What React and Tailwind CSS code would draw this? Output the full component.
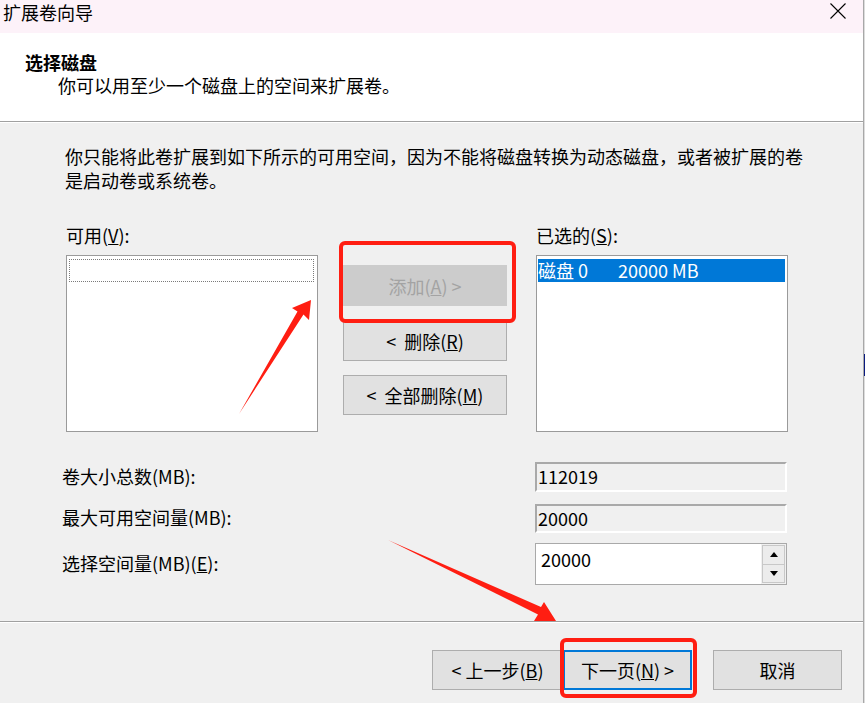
import React from 'react';

const font = "font-['Microsoft_YaHei','Noto_Sans_CJK_SC',sans-serif]";

function Btn({ children, className = '', muted = false }) {
  return (
    <div
      className={`flex items-center justify-center text-[18px] leading-[24px] ${
        muted ? 'text-[#a3a3a3]' : 'text-black'
      } ${className}`}
    >
      {children}
    </div>
  );
}

function ReadOnlyBox({ value, className = '' }) {
  return (
    <div
      className={`w-[252px] border-2 border-t-[#a9a9a9] border-l-[#a9a9a9] border-b-white border-r-white bg-[#f0f0f0] pl-px text-[18px] leading-[24px] ${className}`}
    >
      {value}
    </div>
  );
}

function Arrows() {
  return (
    <svg className="pointer-events-none absolute left-0 top-0" width="865" height="703" viewBox="0 0 865 703">
      <polygon
        fill="#ff1e12"
        points="311,300 309,320 303.5,314.5 239,414 297.5,311.5 292,308"
      />
      <polygon
        fill="#ff1e12"
        points="556,621 534,621 538,614.5 388,540 541,607 544,602"
      />
    </svg>
  );
}

export default function App() {
  return (
    <div className={`relative flex h-[703px] w-[865px] overflow-hidden bg-[#f0f0f0] text-black ${font}`}>
      <div className="flex w-[863px] flex-col">
        {/* title bar */}
        <div className="flex h-[33px] items-start justify-between bg-[#fdf2f9]">
          <div className="pl-[3px] text-[18px] leading-[24px]">扩展卷向导</div>
          <svg className="mr-[17px] mt-[3px]" width="16" height="16" viewBox="0 0 16 16">
            <path d="M0.5 0.5 L15.5 15.5 M15.5 0.5 L0.5 15.5" stroke="#000" strokeWidth="1.1" />
          </svg>
        </div>

        {/* header */}
        <div className="h-[88px] bg-white pl-[25px] pt-[18px]">
          <div className="text-[18px] font-bold leading-[22px]">选择磁盘</div>
          <div className="pl-[33px] text-[18px] leading-[24px]">你可以用至少一个磁盘上的空间来扩展卷。</div>
        </div>
        <div className="h-px bg-[#a0a0a0]" />
        <div className="h-px bg-white" />

        {/* body */}
        <div className="flex h-[498px] flex-col pl-[62px] pt-[21px]">
          <div className="pl-[3px] text-[18px] leading-[24px]">
            你只能将此卷扩展到如下所示的可用空间，因为不能将磁盘转换为动态磁盘，或者被扩展的卷
            <br />
            是启动卷或系统卷。
          </div>

          <div className="mt-[32px] flex items-start pl-[4px]">
            <div className="flex flex-col">
              <div className="-mt-px mb-px text-[18px] leading-[24px]">
                可用(<u>V</u>):
              </div>
              <div className="mt-[7px] h-[177px] w-[252px] border border-[#9a9a9a] bg-white">
                <div className="ml-[2px] mt-[3px] h-[23px] w-[245px] border border-dotted border-[#7a7a7a]" />
              </div>
            </div>

            <div className="ml-[25px] flex w-[164px] flex-col pt-[41px]">
              <Btn muted className="h-[41px] bg-[#cccccc]">
                添加(<u>A</u>)&nbsp;&gt;
              </Btn>
              <Btn className="mt-[15px] h-[40px] border border-[#adadad] bg-[#e1e1e1]">
                &lt;&nbsp;&nbsp;删除(<u>R</u>)
              </Btn>
              <Btn className="mt-[14px] h-[40px] border border-[#adadad] bg-[#e1e1e1]">
                &lt;&nbsp;&nbsp;全部删除(<u>M</u>)
              </Btn>
            </div>

            <div className="ml-[29px] flex flex-col">
              <div className="-mt-px mb-px text-[18px] leading-[24px]">
                已选的(<u>S</u>):
              </div>
              <div className="mt-[7px] h-[177px] w-[252px] border border-[#9a9a9a] bg-white p-px">
                <div className="mt-[2px] flex h-[23px] w-[247px] items-center bg-[#0078d7] text-[18px] leading-[23px] text-white">
                  <span>磁盘 0</span>
                  <span className="ml-[30px]">20000 MB</span>
                </div>
              </div>
            </div>
          </div>

          <div className="mt-[30px] flex flex-col">
            <div className="flex items-center">
              <div className="-mt-[3px] w-[473px] text-[18px] leading-[24px]">卷大小总数(MB):</div>
              <ReadOnlyBox value="112019" className="h-[30px]" />
            </div>
            <div className="mt-[12px] flex items-center">
              <div className="-mt-[3px] w-[473px] text-[18px] leading-[24px]">最大可用空间量(MB):</div>
              <ReadOnlyBox value="20000" className="h-[29px]" />
            </div>
            <div className="mt-[10px] flex items-center">
              <div className="-mt-[3px] w-[473px] text-[18px] leading-[24px]">
                选择空间量(MB)(<u>E</u>):
              </div>
              <div className="flex h-[42px] w-[252px] border border-[#a9a9a9] bg-white">
                <div className="flex-1 pl-[5px] pt-[3px] text-[18px] leading-[24px]">20000</div>
                <div className="flex w-[25px] flex-col bg-[#f0f0f0] p-px">
                  <div className="flex flex-1 items-center justify-center border border-[#c8c8c8] bg-[#ececec]">
                    <svg width="8" height="5" viewBox="0 0 8 5">
                      <polygon points="4,0 8,5 0,5" fill="#000" />
                    </svg>
                  </div>
                  <div className="flex flex-1 items-center justify-center border border-t-0 border-[#c8c8c8] bg-[#ececec]">
                    <svg width="8" height="5" viewBox="0 0 8 5">
                      <polygon points="0,0 8,0 4,5" fill="#000" />
                    </svg>
                  </div>
                </div>
              </div>
            </div>
          </div>
        </div>

        <div className="h-px bg-[#a0a0a0]" />
        <div className="h-px bg-white" />

        {/* footer */}
        <div className="flex flex-1 items-start justify-end pr-[21px] pt-[27px]">
          <Btn className="h-[40px] w-[131px] border border-[#adadad] bg-[#e1e1e1]">
            &lt;&nbsp;上一步(<u>B</u>)
          </Btn>
          <Btn className="h-[40px] w-[129px] border-2 border-[#0078d7] bg-[#e1e1e1]">
            下一页(<u>N</u>)&nbsp;&gt;
          </Btn>
          <Btn className="ml-[21px] h-[40px] w-[129px] border border-[#adadad] bg-[#e1e1e1]">
            取消
          </Btn>
        </div>
      </div>

      {/* window behind the dialog */}
      <div className="flex w-[2px] flex-col border-l border-[#a8a8a8] bg-[#dcdcdc]">
        <div className="h-[354px]" />
        <div className="h-[22px] bg-[#0a1a80]" />
      </div>

      {/* annotation marks */}
      <div className="pointer-events-none absolute left-[339px] top-[241px] h-[82px] w-[177px] rounded-[6px] border-4 border-[#ff1e12]" />
      <div className="pointer-events-none absolute left-[560px] top-[638px] h-[60px] w-[137px] rounded-[6px] border-4 border-[#ff1e12]" />
      <Arrows />
    </div>
  );
}
